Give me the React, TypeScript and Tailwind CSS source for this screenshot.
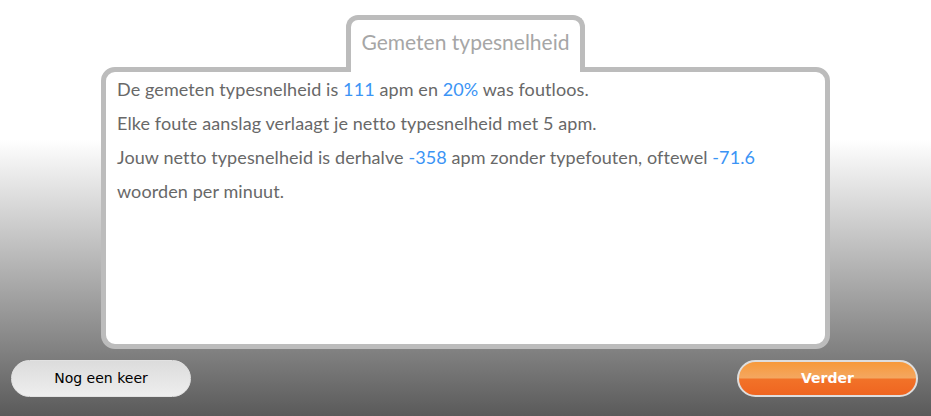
export default function App() {
  const blue = "text-[#3b94f5]";
  return (
    <div className="flex h-[416px] w-[931px] flex-col bg-[linear-gradient(to_bottom,#ffffff_0px,#ffffff_140px,#5a5a5a_416px)] pt-[15px] font-['Lato',sans-serif]">
      <div className="relative z-10 mx-auto -mb-[5px] flex h-[57px] w-[239px] items-start justify-center rounded-t-[12px] border-[5px] border-b-0 border-[#bcbcbc] bg-white pt-[8px]">
        <span className="text-[21px] leading-[27px] text-[#a6a6a6]">Gemeten typesnelheid</span>
      </div>
      <div className="mx-auto h-[282px] w-[729px] rounded-[14px] border-[5px] border-[#bcbcbc] bg-white px-[11px] text-[18px] leading-[34px] tracking-[0.1px] text-[#686868]">
        <p>
          De gemeten typesnelheid is <span className={blue}>111</span> apm en{" "}
          <span className={blue}>20%</span> was foutloos.
        </p>
        <p>Elke foute aanslag verlaagt je netto typesnelheid met 5 apm.</p>
        <p>
          Jouw netto typesnelheid is derhalve <span className={blue}>-358</span> apm zonder typefouten, oftewel{" "}
          <span className={blue}>-71.6</span>
          <br />
          woorden per minuut.
        </p>
      </div>
      <div className="mt-[11px] flex items-start justify-between pl-[11px] pr-[13px] font-['DejaVu_Sans',sans-serif]">
        <button className="h-[37px] w-[180px] rounded-full border border-[#e2e2e2] bg-[linear-gradient(to_bottom,#dcdcdc,#eeeeee)] text-[14px] text-black">
          Nog een keer
        </button>
        <button className="h-[37px] w-[181px] rounded-full border-2 border-[#dedede] bg-[linear-gradient(to_bottom,#f7993a_0%,#f4a760_48%,#f27228_52%,#ef6520_100%)] text-[14px] font-bold text-white">
          Verder
        </button>
      </div>
    </div>
  );
}
